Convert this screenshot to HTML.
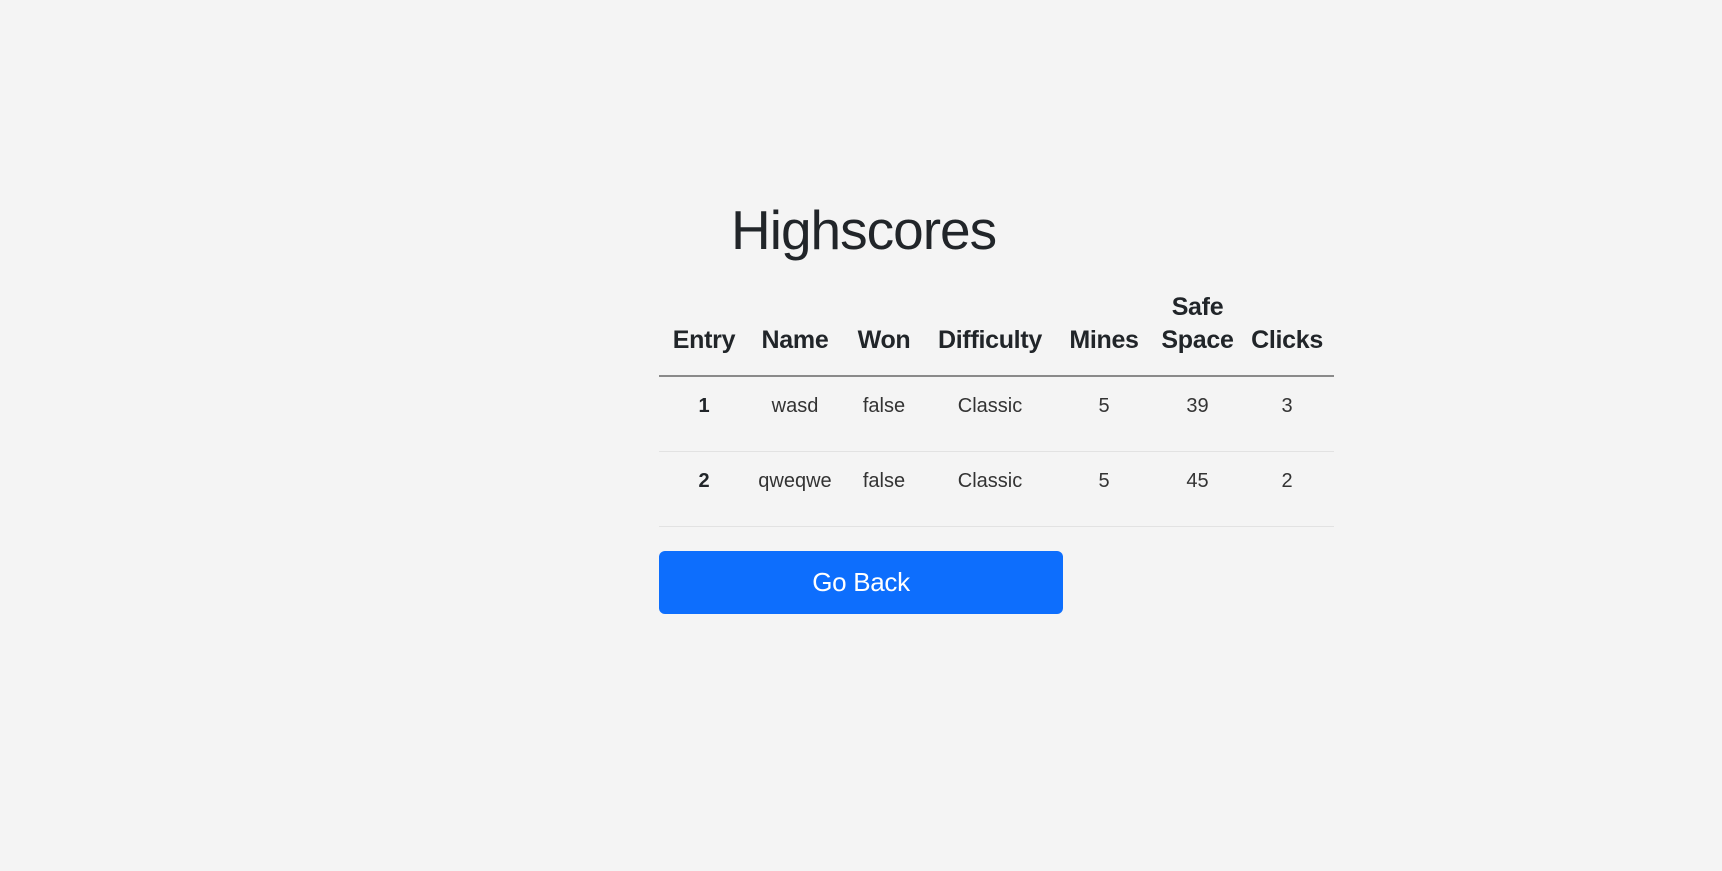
<!DOCTYPE html>
<html><head><style>
html,body{margin:0;padding:0;background:#f4f4f4;width:1722px;height:871px;overflow:hidden;font-family:"Liberation Sans",sans-serif;color:#212529}
h1{position:absolute;left:731px;top:195px;margin:0;font-size:55px;font-weight:400;line-height:70px;letter-spacing:-1px}
table{position:absolute;left:659px;top:291px;width:675px;border-collapse:collapse;table-layout:fixed}
th{font-size:25px;font-weight:700;line-height:33px;vertical-align:bottom;text-align:center;padding:0 0 18px 0;border-bottom:2px solid #8a8a8a;letter-spacing:-0.3px}
td{font-size:20px;text-align:center;height:75px;padding:0 0 15px 0;box-sizing:border-box;border-bottom:1px solid #e2e2e2;color:#333}
td.b{font-weight:700;color:#212529}
.btn{position:absolute;left:659px;top:551px;width:404px;height:63px;background:#0d6efd;border-radius:6px;color:#fff;font-size:26px;text-align:center;line-height:63px;letter-spacing:-0.3px}
</style></head><body>
<h1>Highscores</h1>
<table>
<colgroup><col style="width:90px"><col style="width:92px"><col style="width:86px"><col style="width:126px"><col style="width:102px"><col style="width:85px"><col style="width:94px"></colgroup>
<tr><th>Entry</th><th>Name</th><th>Won</th><th>Difficulty</th><th>Mines</th><th>Safe<br>Space</th><th>Clicks</th></tr>
<tr><td class="b">1</td><td>wasd</td><td>false</td><td>Classic</td><td>5</td><td>39</td><td>3</td></tr>
<tr><td class="b">2</td><td>qweqwe</td><td>false</td><td>Classic</td><td>5</td><td>45</td><td>2</td></tr>
</table>
<div class="btn">Go Back</div>
</body></html>
